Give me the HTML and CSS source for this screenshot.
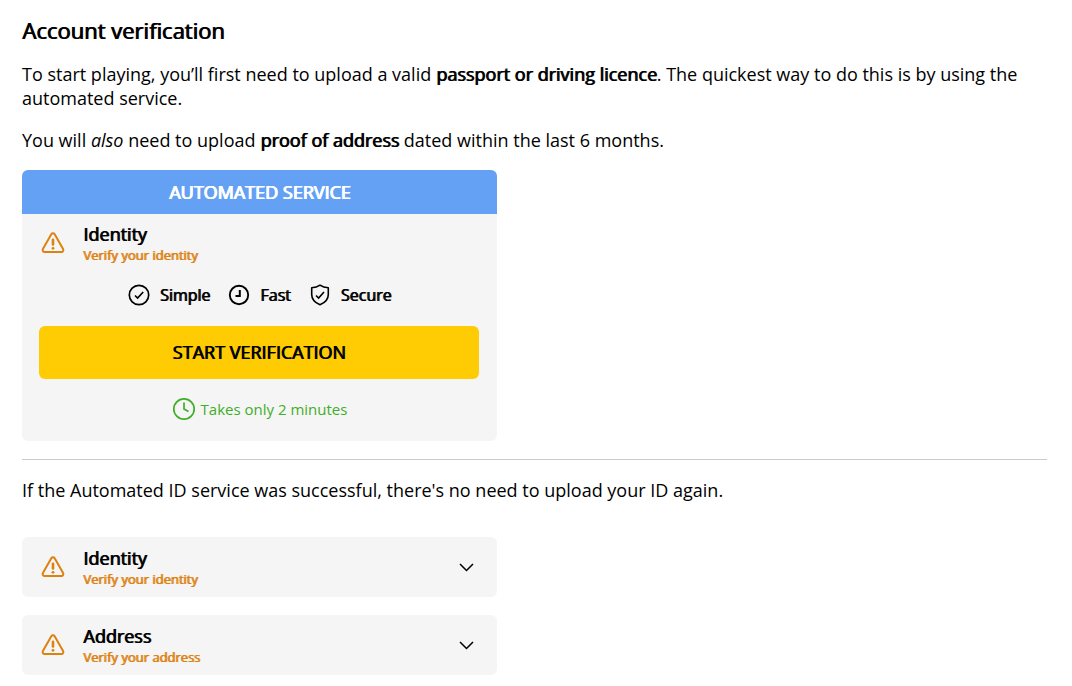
FILE: index.html
```html
<!DOCTYPE html>
<html lang="en">
<head>
    <meta charset="UTF-8">
    <meta name="viewport" content="width=device-width, initial-scale=1.0">
    <title>Account verification</title>
    <link rel="stylesheet" href="styles.css">
</head>
<body>
    <!-- shared icons -->
    <svg class="sprite" aria-hidden="true">
        <symbol id="warning" viewBox="0 0 24 24">
            <path d="M10.3 3.2 1.9 18a2 2 0 0 0 1.7 3h16.8a2 2 0 0 0 1.7-3L13.7 3.2a2 2 0 0 0-3.4 0Z" fill="none" stroke="currentColor" stroke-width="2" stroke-linejoin="round"/>
            <path d="M12 8.8v4.7" fill="none" stroke="currentColor" stroke-width="2.6" stroke-linecap="round"/>
            <circle cx="12" cy="17.3" r="1.4" fill="currentColor"/>
        </symbol>
        <symbol id="chevron" viewBox="0 0 18 18">
            <path d="m3 6 6.500 6.500L16 6" fill="none" stroke="currentColor" stroke-width="1.500"/>
        </symbol>
    </svg>

    <main class="container">
        <h1>Account verification</h1>
        <p>To start playing, you’ll first need to upload a valid <strong>passport or driving licence</strong>. The quickest way to do this is by using the automated service.</p>
        <p>You will <em>also</em> need to upload <strong>proof of address</strong> dated within the last 6 months.</p>

        <section class="card">
            <h2 class="card-header">AUTOMATED SERVICE</h2>
            <div class="item">
                <svg class="warning-icon" aria-hidden="true"><use href="#warning"/></svg>
                <div class="item-text">
                    <h3>Identity</h3>
                    <span class="status">Verify your identity</span>
                </div>
            </div>
            <ul class="features">
                <li>
                    <svg class="feature-icon" viewBox="0 0 22 22" aria-hidden="true">
                        <circle cx="11" cy="11" r="9.700" fill="none" stroke="currentColor" stroke-width="1.700"/>
                        <path d="m7 11.500 2.600 2.500 5.600-6" fill="none" stroke="currentColor" stroke-width="1.700"/>
                    </svg>
                    Simple
                </li>
                <li>
                    <svg class="feature-icon" viewBox="0 0 22 22" aria-hidden="true">
                        <circle cx="11" cy="11" r="9.200" fill="none" stroke="currentColor" stroke-width="1.900"/>
                        <path d="M11.800 6v6H7.500" fill="none" stroke="currentColor" stroke-width="2"/>
                    </svg>
                    Fast
                </li>
                <li>
                    <svg class="feature-icon" viewBox="0 0 22 22" aria-hidden="true">
                        <path d="M11 1.200c2.400 1.700 5 2.400 8.300 2.500v6.800c0 4.800-3.500 8.300-8.300 10.300-4.800-2-8.300-5.500-8.300-10.300V3.700C6 3.600 8.600 2.900 11 1.200Z" fill="none" stroke="currentColor" stroke-width="1.600" stroke-linejoin="round"/>
                        <path d="m7 11.500 2.600 2.500 5.400-6" fill="none" stroke="currentColor" stroke-width="1.600"/>
                    </svg>
                    Secure
                </li>
            </ul>
            <button class="start-btn" type="button">START VERIFICATION</button>
            <div class="duration">
                <svg class="duration-icon" viewBox="0 0 24 24" aria-hidden="true">
                    <circle cx="12" cy="12" r="10.200" fill="none" stroke="currentColor" stroke-width="1.700"/>
                    <path d="M12 5.500V12l4.500 2.500" fill="none" stroke="currentColor" stroke-width="1.700"/>
                </svg>
                Takes only 2 minutes
            </div>
        </section>

        <hr>
        <p class="note">If the Automated ID service was successful, there's no need to upload your ID again.</p>

        <button class="item panel" type="button" aria-expanded="false">
            <svg class="warning-icon" aria-hidden="true"><use href="#warning"/></svg>
            <span class="item-text">
                <span class="item-title">Identity</span>
                <span class="status">Verify your identity</span>
            </span>
            <svg class="chevron-icon" aria-hidden="true"><use href="#chevron"/></svg>
        </button>
        <button class="item panel" type="button" aria-expanded="false">
            <svg class="warning-icon" aria-hidden="true"><use href="#warning"/></svg>
            <span class="item-text">
                <span class="item-title">Address</span>
                <span class="status">Verify your address</span>
            </span>
            <svg class="chevron-icon" aria-hidden="true"><use href="#chevron"/></svg>
        </button>
    </main>
</body>
</html>
```
FILE: styles.css
```css
* {
    margin: 0;
    padding: 0;
    box-sizing: border-box;
}

body {
    background-color: #fff;
    color: #000;
    font-family: "Open Sans", Arial, sans-serif;
    font-size: 18px;
    line-height: 24px;
}

.sprite {
    display: none;
}

.container {
    padding: 16px 25px 10px 22px;
}

/* Headings and bold text use the regular face, thickened */
h1, h2, h3, strong, .item-title, .status, .features, .start-btn {
    font-weight: 400;
    text-shadow: 1px 0 0 currentColor;
}

h1 {
    font-size: 22px;
    line-height: 28px;
    margin-bottom: 18px;
}

p {
    margin-bottom: 18px;
}

/* Automated service card */
.card {
    max-width: 475px;
    padding-bottom: 20px;
    border-radius: 6px;
    background-color: #f5f5f5;
    overflow: hidden;
}

.card-header {
    padding: 10px;
    background-color: #64a1f4;
    color: #fff;
    font-size: 18px;
    line-height: 24px;
    text-align: center;
    text-shadow: 1px 0 0 #fff, 1px 0 0 #fff;
}

.item {
    display: flex;
    align-items: center;
    gap: 18px;
    width: 100%;
    height: 60px;
    padding: 0 22px 2px 19px;
}

.warning-icon {
    width: 24px;
    height: 24px;
    color: #dd8211;
}

.item-text {
    display: flex;
    flex-direction: column;
    flex: 1;
}

h3, .item-title {
    font-size: 18px;
    line-height: 24px;
}

.status {
    color: #dd8211;
    font-size: 13px;
    line-height: 18px;
}

.features {
    display: flex;
    justify-content: center;
    gap: 18px;
    margin: 9px 0 19px;
    list-style: none;
    font-size: 16px;
}

.features li {
    display: flex;
    align-items: center;
    gap: 10px;
}

.feature-icon {
    width: 22px;
    height: 22px;
}

.start-btn {
    display: block;
    width: calc(100% - 35px);
    margin: 0 18px 18px 17px;
    padding: 14px;
    border: none;
    border-radius: 6px;
    background-color: #ffcc03;
    color: #000;
    font-family: inherit;
    font-size: 18px;
    line-height: 25px;
    cursor: pointer;
}

.duration {
    display: flex;
    align-items: center;
    justify-content: center;
    gap: 5px;
    color: #3fae29;
    font-size: 15px;
}

.duration-icon {
    width: 24px;
    height: 24px;
}

hr {
    margin: 18px 0;
    border: none;
    border-top: 1px solid #ccc;
}

.note {
    margin-bottom: 35px;
}

/* Collapsed upload panels */
.panel {
    max-width: 475px;
    margin-bottom: 18px;
    padding-bottom: 0;
    border: none;
    border-radius: 6px;
    background-color: #f5f5f5;
    color: #000;
    font-family: inherit;
    text-align: left;
    cursor: pointer;
}

.panel:last-child {
    margin-bottom: 0;
}

.chevron-icon {
    width: 18px;
    height: 18px;
}
```
